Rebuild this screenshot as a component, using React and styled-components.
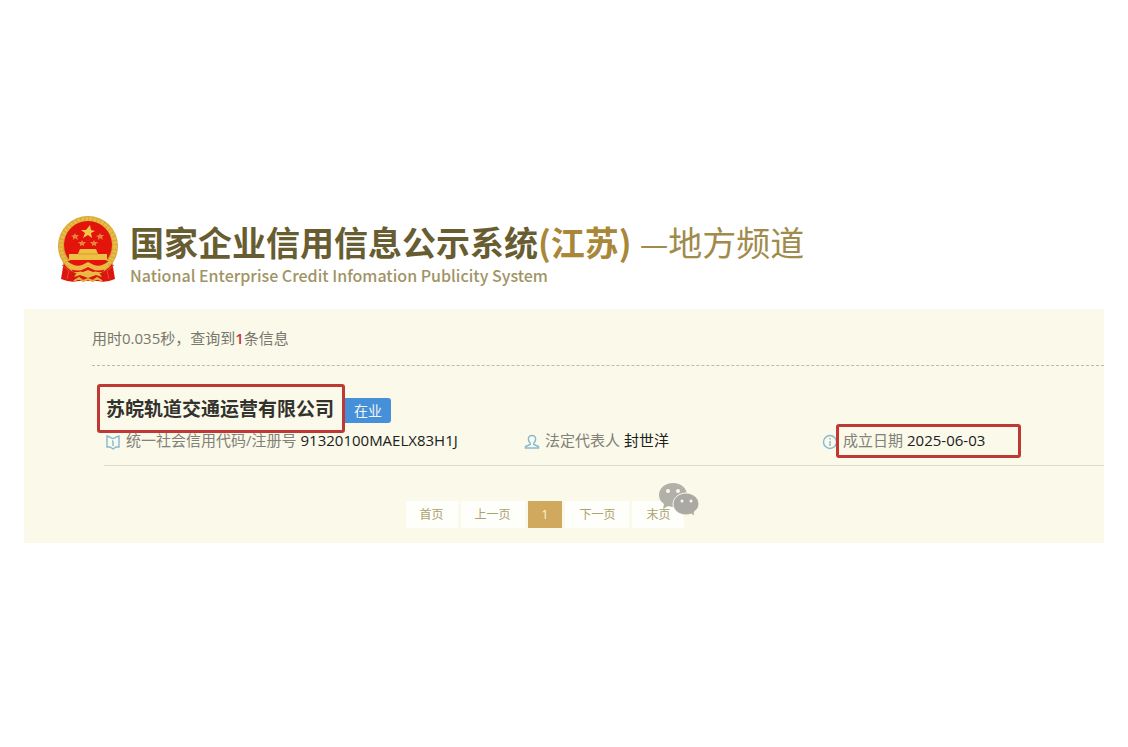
import React from "react";
import styled, { createGlobalStyle } from "styled-components";

const pages = [
  { label: "首页" },
  { label: "上一页" },
  { label: "1", active: true },
  { label: "下一页" },
  { label: "末页" },
];

function Emblem() {
  return (
    <EmblemSvg viewBox="0 0 62 68" aria-hidden="true">
      <path d="M7 46 L4 64 Q14 68 21 66 L41 66 Q49 68 58 64 L55 46 Z" fill="#d9160f" />
      <circle cx="31" cy="31" r="30" fill="#d9a634" />
      <circle cx="31" cy="31" r="27" fill="none" stroke="#e6bb48" strokeWidth="4" strokeDasharray="3 1" />
      <circle cx="31" cy="30" r="24" fill="#e3140c" />
      <path d="M33 10 L34 15 L38 16 L34 18 L35 23 L31 20 L26 23 L28 18 L24 15 L29 15 Z" fill="#f3c74c" />
      <g fill="#e8843b">
        <path d="M18 18l1 2 3 0-2 2 1 3-3-2-2 2 0-3-2-1 3-1z" />
        <path d="M43 18l1 2 3 0-2 2 1 3-3-2-2 2 0-3-2-1 3-1z" />
        <path d="M25 25l1 2 3 0-2 2 0 2-2-1-2 1 0-2-2-2 3 0z" />
        <path d="M37 25l1 2 3 0-2 2 0 2-2-1-2 1 0-2-2-2 3 0z" />
      </g>
      <path d="M23 34 H39 L41 39 H50 V45 H12 V39 H21 Z" fill="#efbf45" />
      <path d="M21 39 H41" stroke="#d99a30" />
      <path d="M10 46 H52 L46 57 H16 Z" fill="#e3140c" />
      <path d="M9 45 Q18 53 25 50 L31 47 L37 50 Q44 53 53 45 L49 54 Q40 57 35 54 L31 52 L27 54 Q22 57 13 54 Z" fill="#ecb944" />
      <path d="M17 62 Q21 55 26 57 L31 55 L36 57 Q41 55 45 62 L39 60 L31 63 L23 60 Z" fill="#ecb944" />
      <path d="M5 50 L12 56 L10 64 M57 50 L50 56 L52 64" fill="none" stroke="#ed4b24" />
      <path d="M17 66 l5 -3 4 3 5 -2 5 2 4 -3 5 3" fill="none" stroke="#e5ad3d" strokeWidth="2" />
    </EmblemSvg>
  );
}

function BookIcon() {
  return (
    <Icon viewBox="0 0 16 16" aria-hidden="true">
      <path d="M2 2 L5 3 Q8 6 11 3 L14 2 V13 H11 L8 15 L5 13 H2 Z M8 7 V12 M7 7 H8" />
    </Icon>
  );
}

function PersonIcon() {
  return (
    <Icon viewBox="0 0 16 16" aria-hidden="true">
      <path d="M8 1.500 C5 1.500 4 3.500 4.500 6 C4.800 7.500 5.500 8.500 6.200 9 V10.500 L1.500 12.500 V14 H14.500 V12.500 L9.800 10.500 V9 C10.500 8.500 11.200 7.500 11.500 6 C12 3.500 11 1.500 8 1.500 Z" />
    </Icon>
  );
}

function InfoIcon() {
  return (
    <Icon viewBox="0 0 16 16" aria-hidden="true">
      <circle cx="8" cy="8" r="6.500" />
      <path d="M8 7 V12 M8 4 V5.500" />
    </Icon>
  );
}

function ChatMark() {
  return (
    <ChatSvg viewBox="0 0 42 34" aria-hidden="true">
      <path
        fill="#b1b0a9"
        d="M15 1 C7 1 1 6 1 13 C1 17 3 20 6 22 L5 27 L10 24 Q13 25 16 25 C24 25 29 20 29 13 C29 6 23 1 15 1 Z"
      />
      <circle cx="10" cy="9" r="2" fill="#faf9ea" />
      <circle cx="20" cy="9" r="2" fill="#faf9ea" />
      <path
        fill="#aaa9a3"
        stroke="#faf9ea"
        d="M28 11 C21 11 15 16 15 22 C15 28 21 33 28 33 Q31 33 33 32 L37 34 L36 30 C39 28 41 25 41 22 C41 16 35 11 28 11 Z"
      />
      <circle cx="24" cy="19" r="1.500" fill="#faf9ea" />
      <circle cx="33" cy="19" r="1.500" fill="#faf9ea" />
    </ChatSvg>
  );
}

function App() {
  return (
    <Page>
      <GlobalStyle />
      <Header>
        <Emblem />
        <div>
          <SiteTitle>
            国家企业信用信息公示系统<Region>(江苏)</Region>
            <Channel>
              <Dash>—</Dash>地方频道
            </Channel>
          </SiteTitle>
          <SubTitle>National Enterprise Credit Infomation Publicity System</SubTitle>
        </div>
      </Header>
      <Panel>
        <Summary>
          用时0.035秒，查询到<Count>1</Count>条信息
        </Summary>
        <Result>
          <NameRow>
            <Company>
              <CompanyLink href="#">苏皖轨道交通运营有限公司</CompanyLink>
            </Company>
            <Status>在业</Status>
          </NameRow>
          <Details>
            <Detail>
              <BookIcon />
              <dt>统一社会信用代码/注册号</dt>
              <dd>91320100MAELX83H1J</dd>
            </Detail>
            <Detail>
              <PersonIcon />
              <dt>法定代表人</dt>
              <dd>封世洋</dd>
            </Detail>
            <Detail $marked>
              <InfoIcon />
              <dt>成立日期</dt>
              <dd>2025-06-03</dd>
            </Detail>
          </Details>
        </Result>
        <PagerRow>
          <Pager>
            {pages.map((page) => (
              <PageLink key={page.label} href="#" $active={page.active}>
                {page.label}
              </PageLink>
            ))}
            <ChatMark />
          </Pager>
        </PagerRow>
      </Panel>
    </Page>
  );
}

export default App;

const GlobalStyle = createGlobalStyle`
  *, *::after {
    box-sizing: border-box;
  }
  body {
    margin: 0;
    background: #fff;
    font-family: "Open Sans", "Noto Sans CJK SC", sans-serif;
    font-size: 15px;
  }
  h1, h2, p, dl, dt, dd {
    margin: 0;
  }
  a {
    color: inherit;
    text-decoration: none;
  }
`;

const Page = styled.div`
  padding: 215px 24px 0;
`;
const Header = styled.header`
  display: flex;
  align-items: flex-start;
  gap: 11px;
  height: 94px;
  padding-left: 33px;
  font-family: "Noto Sans CJK SC", sans-serif;
  white-space: nowrap;
`;
const EmblemSvg = styled.svg`
  width: 62px;
  height: 68px;
  flex: none;
`;
const SiteTitle = styled.h1`
  display: flex;
  padding-top: 7px;
  font-size: 34px;
  line-height: 40px;
  font-weight: 700;
  color: #685d31;
`;
const Region = styled.span`
  color: #a98739;
`;
const Channel = styled.span`
  display: flex;
  margin-left: 8px;
  font-weight: 400;
  color: #a08b4b;
`;
const Dash = styled.span`
  font-size: 32px;
`;
const SubTitle = styled.p`
  font-size: 16px;
  line-height: 26px;
  font-weight: 500;
  color: #a09465;
`;
const Panel = styled.main`
  padding: 16px 0 15px;
  background: #faf9ea;
`;
const Summary = styled.p`
  margin-left: 68px;
  padding-bottom: 13px;
  border-bottom: 1px dashed #bcbbad;
  line-height: 27px;
  color: #77776d;
`;
const Count = styled.strong`
  font-weight: 600;
  color: #c3363b;
`;
const Result = styled.section`
  margin-left: 80px;
  padding-top: 18px;
  border-bottom: 1px solid #dcdcd0;
`;
const NameRow = styled.div`
  display: flex;
  align-items: center;
  height: 48px;
`;
const Company = styled.h2`
  position: relative;
  padding: 2px 11px 0 2px;
  font-size: 19px;
  line-height: 47px;
  font-weight: 700;
  color: #33332d;
  &::after {
    content: "";
    position: absolute;
    inset: 0 0 0 -7px;
    border: 3px solid #c03833;
    border-radius: 3px;
    pointer-events: none;
  }
`;
const CompanyLink = styled.a`
  display: block;
`;
const Status = styled.span`
  margin-top: 4px;
  padding: 0 9px;
  border-radius: 0 3px 3px 0;
  background: #4590d8;
  font-size: 14px;
  line-height: 25px;
  color: #f2f7f4;
`;
const Details = styled.dl`
  display: grid;
  grid-template-columns: 419fr 298fr 283fr;
  height: 33px;
  white-space: nowrap;
`;
const Detail = styled.div`
  position: relative;
  display: flex;
  align-items: center;
  height: 16px;
  line-height: 16px;
  dt {
    margin: 0 4px 0 5px;
    color: #818177;
  }
  dd {
    color: #20201c;
  }
  &::after {
    content: "";
    display: ${(props) => (props.$marked ? "block" : "none")};
    position: absolute;
    inset: -8px auto auto 15px;
    width: 185px;
    height: 34px;
    border: 3px solid #c03833;
    border-radius: 3px;
    pointer-events: none;
  }
`;
const Icon = styled.svg`
  width: 16px;
  height: 16px;
  margin: 3px 0 0 1px;
  flex: none;
  fill: none;
  stroke: #86b8d4;
  stroke-width: 1.4;
`;
const PagerRow = styled.div`
  display: flex;
  justify-content: center;
  padding: 35px 38px 0 0;
`;
const Pager = styled.nav`
  position: relative;
  display: flex;
  align-items: center;
  gap: 3px;
`;
const PageLink = styled.a`
  padding: 0 14px;
  font-size: 12px;
  line-height: 27px;
  color: ${(props) => (props.$active ? "#fff8dc" : "#aaa36b")};
  background: ${(props) => (props.$active ? "#d0a95f" : "#fefefa")};
`;
const ChatSvg = styled.svg`
  position: absolute;
  right: -16px;
  top: -19px;
  width: 42px;
  height: 34px;
`;
